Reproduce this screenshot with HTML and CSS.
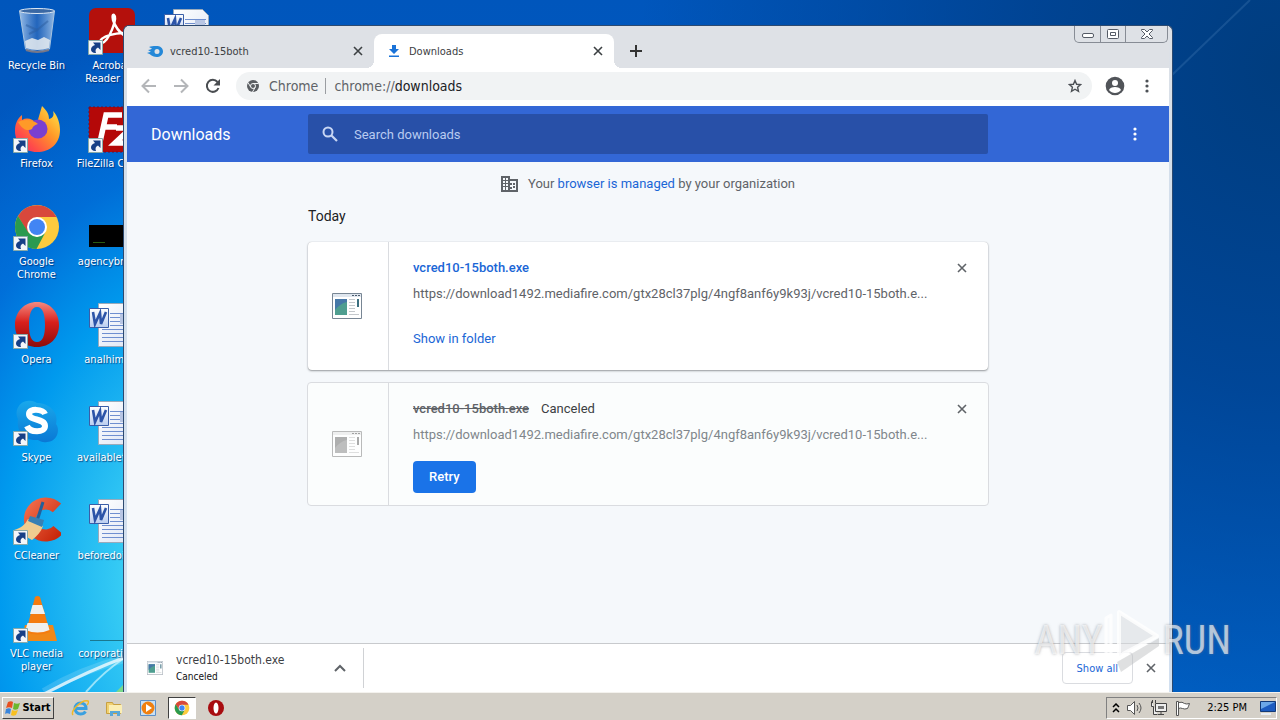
FILE: index.html
```html
<!DOCTYPE html>
<html lang="en">
<head>
<meta charset="utf-8">
<title>Downloads</title>
<link rel="stylesheet" href="styles.css">
</head>
<body>
<svg class="defs" aria-hidden="true">
  <defs>
    <linearGradient id="gDoc" x1="0" y1="0" x2="1" y2="1"><stop offset="0" stop-color="#fff"/><stop offset="1" stop-color="#dce4f4"/></linearGradient>
    <linearGradient id="gWord" x1="0" y1="0" x2="0" y2="1"><stop offset="0" stop-color="#fff"/><stop offset="1" stop-color="#b9cdf0"/></linearGradient>
    <linearGradient id="gFox" x1="1" y1="0" x2="0" y2="1"><stop offset="0" stop-color="#fff04a"/><stop offset=".4" stop-color="#ff9a28"/><stop offset=".75" stop-color="#ff4a4a"/><stop offset="1" stop-color="#e82a70"/></linearGradient>
    <linearGradient id="gOpera" x1="0" y1="0" x2="0" y2="1"><stop offset="0" stop-color="#f58a80"/><stop offset=".45" stop-color="#d8201c"/><stop offset="1" stop-color="#8c0c0c"/></linearGradient>
    <linearGradient id="gSkype" x1="0" y1="0" x2="0" y2="1"><stop offset="0" stop-color="#19a8ec"/><stop offset="1" stop-color="#0a78d4"/></linearGradient>
    <linearGradient id="gBin" x1="0" y1="0" x2="1" y2="0"><stop offset="0" stop-color="#b4d0f0" stop-opacity=".85"/><stop offset=".5" stop-color="#3a70bc" stop-opacity=".6"/><stop offset="1" stop-color="#b8d2ee" stop-opacity=".8"/></linearGradient>
    <linearGradient id="gCC" x1="0" y1="0" x2="1" y2="1"><stop offset="0" stop-color="#f06a48"/><stop offset="1" stop-color="#c8280c"/></linearGradient>
    <symbol id="shortcut" viewBox="0 0 15 15">
      <path fill="#f4f6fa" stroke="#8aa" d="M.5.5h14v14H.5z"/>
      <path fill="#173f86" d="M5 2.500h7.500V10l-2.500-2.500C7.500 8.500 7 10.500 8 13 5.500 13.500 3 12 3 9.500 3 7.500 4.500 5.800 7 5z"/>
    </symbol>
    <symbol id="chrome" viewBox="0 0 48 48">
      <circle cx="24" cy="24" r="22" fill="#fdcb3e"/>
      <path fill="#d8483c" d="M5 13 15 30 24 14h19.500A22 22 0 0 0 5 13z"/>
      <path fill="#2a9a50" d="M5 13 15.300 29.500 24 34l8-4-8.500 16A22 22 0 0 1 5 13z"/>
      <circle cx="24" cy="24" r="10" fill="#fff"/><circle cx="24" cy="24" r="8" fill="#4285f4"/>
    </symbol>
    <symbol id="word" viewBox="0 0 48 48">
      <path fill="url(#gDoc)" stroke="#9ab" d="M10.500 2.500h29l6 6v37h-35z"/>
      <path stroke="#6f8fd0" d="M22 12.500h21M22 16.500h21M22 20.500h21M22 24.500h21M14 28.500h29M14 32.500h29M14 36.500h29M14 40.500h29"/>
      <path fill="#b8c6e4" d="M32 13h10v10H32z"/>
      <path fill="url(#gWord)" stroke="#3a5ea8" d="M1.500 7.500h19v19h-19z"/>
      <path fill="none" stroke="#2c54a8" stroke-width="2.600" d="m5 11 2 12 5-11 1 11 5-12"/>
    </symbol>
    <symbol id="exe" viewBox="0 0 30 26">
      <path fill="#fff" stroke="#788694" d="M.5.5h29v25H.5z"/>
      <path fill="#dfe6ee" d="M1 1h28v3H1z"/><path stroke="#4a5a6c" stroke-dasharray="2 1" d="M20 2.500h8"/>
      <path fill="#4f9e90" d="M3 6h12v16H3z"/><path fill="#4678a8" d="M3 6h12v3c-5 1-9 4-12 8z"/>
      <path stroke="#c4c8cc" d="M17 6.500h6M17 9.500h6M17 12.500h6M17 15.500h6M17 18.500h6M17 21.500h10"/>
      <path fill="#3c7080" d="M25 6h2v8h-2z"/>
    </symbol>
    <symbol id="cross" viewBox="0 0 10 10"><path fill="none" stroke="currentColor" stroke-width="1.600" d="m1 1 8 8M9 1 1 9"/></symbol>
    <symbol id="dots" viewBox="0 0 4 14"><g fill="currentColor"><circle cx="2" cy="2" r="1.600"/><circle cx="2" cy="7" r="1.600"/><circle cx="2" cy="12" r="1.600"/></g></symbol>
    <symbol id="opera" viewBox="0 0 48 48"><path fill="url(#gOpera)" fill-rule="evenodd" d="M24 1c13 0 22 10 22 23S37 46 24 46 2 37 2 24 11 1 24 1zm0 5c-6 0-8 8-8 18s2 17 8 17 8-7 8-17-2-18-8-18z"/></symbol>
  </defs>
</svg>

<main class="desktop">
  <svg class="streaks" viewBox="0 0 1280 692" preserveAspectRatio="none" aria-hidden="true">
    <path fill="none" stroke="#fff" stroke-opacity=".15" stroke-width="8" d="M44 692Q80 670 124 659"/>
    <path fill="none" stroke="#fff" stroke-opacity=".75" stroke-width="3" d="M44 694Q90 670 126 657"/>
    <path fill="none" stroke="#e8ffff" stroke-opacity=".6" stroke-width="2" d="M86 692Q104 671 126 657"/>
    <path fill="#8fe070" fill-opacity=".8" d="m116 692 8-8v8z"/>
    <path stroke="#6fa0d0" stroke-opacity=".2" stroke-width="2" d="M1172 75 1250 0"/>
  </svg>

  <ul class="icons">
    <li><svg viewBox="0 0 48 48"><path fill="url(#gBin)" stroke="#a8c4e0" d="M6.500 4h35l-5 38q-12 5-24 0z"/><ellipse cx="24" cy="4" rx="17.500" ry="2.500" fill="#3a68a4" stroke="#dfeaf5"/><path fill="#e8ecf0" fill-opacity=".85" d="m12 34 7-3 6 2 6-3 6 3-1 8q-12 4-23 0z"/><path fill="none" stroke="#2c5da0" stroke-width="2" stroke-opacity=".5" d="m13 18 11 5 11-9M16 27l8-4"/><path fill="none" stroke="#778" stroke-width="2" d="M13 43q11 4 23 0"/></svg><span>Recycle Bin</span></li>
    <li><svg viewBox="0 0 48 48"><path fill="url(#gFox)" d="M29 1c5 5 7 8 7 13 5-1 5-5 4-8 5 5 7 13 7 19 0 14-10 22-23 22S2 38 2 26c0-7 2-12 7-16v5c5-3 10-1 15 3z"/><circle cx="25" cy="24" r="9.500" fill="#7a3fd0"/><path fill="#ff9a28" d="M5 17c5-3 15-3 20 2-3 1-5 2-6 5-3 2-9 2-14-7z"/><use href="#shortcut" y="33" width="15" height="15"/></svg><span>Firefox</span></li>
    <li><svg viewBox="0 0 48 48"><use href="#chrome" width="48" height="48"/><use href="#shortcut" y="33" width="15" height="15"/></svg><span>Google<br>Chrome</span></li>
    <li><svg viewBox="0 0 48 48"><use href="#opera" width="48" height="48"/><use href="#shortcut" y="33" width="15" height="15"/></svg><span>Opera</span></li>
    <li><svg viewBox="0 0 48 48"><path fill="url(#gSkype)" d="M14 2c5-1 8 1 10 2 13 0 22 10 19 21 5 7 0 18-9 18-4 1-7-1-9-2C12 42 3 33 5 20 1 12 6 3 14 2z"/><path fill="none" stroke="#fff" stroke-width="6" d="M32 15c-2-5-16-6-16 0 0 7 16 4 16 12 0 7-15 7-18 0"/><use href="#shortcut" y="32" width="15" height="15"/></svg><span>Skype</span></li>
    <li><svg viewBox="0 0 48 48"><path fill="none" stroke="url(#gCC)" stroke-width="12" d="M44 11A16 16 0 1 0 45 33"/><path stroke="#24609a" stroke-width="3" d="M30 5 24 24"/><path fill="#f0cc90" d="m15 22 15 7c-2 6-6 10-11 14L1 33c7-2 11-5 14-11z"/><path fill="#3880b4" d="m17 19 14 4-2 7-14-6z"/><use href="#shortcut" y="33" width="15" height="15"/></svg><span>CCleaner</span></li>
    <li><svg viewBox="0 0 48 48"><path fill="#f08818" d="M12 30h28l4 16H8z"/><path fill="#f47c10" d="M22 2q2.500-2 5 0l10 35q-13 5-24 0z"/><path fill="#f0f0ee" d="m19.500 10h9.500l3 9H17zM14.500 28h20l2 7q-12 5-24 0z"/><use href="#shortcut" y="33" width="15" height="15"/></svg><span>VLC media<br>player</span></li>
    <li><svg viewBox="0 0 48 48"><rect x="1" y="1" width="46" height="45" rx="7" fill="#b4100c"/><path fill="none" stroke="#fff" stroke-width="2.500" d="M12 34c4-7 30-11 31-5 0 4-13-1-18-16-1-4 0-6 1-5 4 3-5 26-12 28"/><use href="#shortcut" y="33" width="15" height="15"/></svg><span>Acrobat<br>Reader DC</span></li>
    <li><svg viewBox="0 0 48 48"><path fill="#b40808" stroke="#6d1030" stroke-dasharray="2 2" d="M1 2h46v45H1z"/><path fill="none" stroke="#fff" stroke-width="5.500" d="m12 37 6-27h16M14 22h15M28 23h15L27 38h14"/><use href="#shortcut" y="33" width="15" height="15"/></svg><span>FileZilla Client</span></li>
    <li><svg viewBox="0 0 48 48"><path d="M1 22h46v22H1z"/><path stroke="#2a5a10" d="M5 39.500h12"/></svg><span>agencybr.png</span></li>
    <li><svg viewBox="0 0 48 48"><use href="#word" width="48" height="48"/></svg><span>analhim.rtf</span></li>
    <li><svg viewBox="0 0 48 48"><use href="#word" width="48" height="48"/></svg><span>availableto.rtf</span></li>
    <li><svg viewBox="0 0 48 48"><use href="#word" width="48" height="48"/></svg><span>beforedoin.rtf</span></li>
    <li><svg viewBox="0 0 48 48"><path stroke="#1a7890" stroke-width="1" d="M2 45.500h46"/></svg><span>corporati.png</span></li>
    <li><svg viewBox="0 0 48 48"><use href="#word" width="48" height="48"/></svg></li>
  </ul>

  <section class="window">
    <div class="strip">
      <div class="tab">
        <svg class="i16" viewBox="0 0 16 16"><path fill="#2488d8" fill-rule="evenodd" d="M2 4c2-1 4-1 7-1 4.500 0 7 2 7 5.500S13 14 9.500 14C5 14 4 11 0 10c2-1 3-1 4-1L1 7c2 0 3-1 4-1.500zm8 2a2.500 2.500 0 1 0 0 5 2.500 2.500 0 0 0 0-5z"/></svg>
        <span>vcred10-15both</span>
        <button aria-label="Close tab"><svg class="i10"><use href="#cross"/></svg></button>
      </div>
      <div class="tab active">
        <svg class="i16" viewBox="0 0 16 16"><path fill="#1a73d8" d="M6 2h4v4h3L8 11 3 6h3zM3 12.500h10V14H3z"/></svg>
        <span>Downloads</span>
        <button aria-label="Close tab"><svg class="i10"><use href="#cross"/></svg></button>
      </div>
      <button class="plus" aria-label="New tab"><svg viewBox="0 0 12 12"><path stroke="#333" stroke-width="2" d="M6 0v12M0 6h12"/></svg></button>
      <div class="controls">
        <button aria-label="Minimize"><svg width="14" height="8" viewBox="0 0 14 8"><rect x="1.500" y="3.500" width="11" height="4" rx="1.500" fill="#fff" stroke="#555b66"/></svg></button>
        <button aria-label="Maximize"><svg width="12" height="10" viewBox="0 0 12 10"><rect x=".5" y=".5" width="11" height="9" rx="1" fill="#fff" stroke="#555b66"/><path fill="#fff" stroke="#555b66" d="M3.500 3.500h5v3h-5z"/></svg></button>
        <button aria-label="Close"><svg width="12" height="10" viewBox="0 0 12 10"><path fill="#fff" stroke="#555b66" d="M.5.500h3L6 3 8.500.500h3v1L8 5l3.500 3.500v1h-3L6 7 3.500 9.500h-3v-1L4 5 .5 1.500z"/></svg></button>
      </div>
    </div>

    <div class="toolbar">
      <button aria-label="Back"><svg class="i16" viewBox="0 0 16 16"><path fill="none" stroke="#b4b6b9" stroke-width="2" d="M15 8H2M8 1.500 1.500 8 8 14.500"/></svg></button>
      <button aria-label="Forward"><svg class="i16" viewBox="0 0 16 16"><path fill="none" stroke="#b4b6b9" stroke-width="2" d="M1 8h13M8 1.500 14.500 8 8 14.500"/></svg></button>
      <button aria-label="Reload"><svg class="i16" viewBox="0 0 16 16"><path fill="none" stroke="#4a4d51" stroke-width="2" d="M13.500 10A6 6 0 1 1 12.500 4"/><path fill="#4a4d51" d="M15 1v6.500H8.500z"/></svg></button>
      <div class="omnibox">
        <svg width="12" height="12" viewBox="0 0 12 12"><circle cx="6" cy="6" r="6" fill="#5a5d61"/><circle cx="6" cy="6" r="2.500" fill="#5a5d61" stroke="#f1f3f4"/><path fill="none" stroke="#f1f3f4" d="M6 3.500h5.500M3.800 7.300 1 2.500M8.200 7.300 5.500 12"/></svg>
        <span class="scheme">Chrome</span>
        <label class="proto" for="url">chrome://</label>
        <input id="url" type="text" value="downloads">
        <button aria-label="Bookmark"><svg width="14" height="14" viewBox="0 0 14 14"><path fill="none" stroke="#4d5156" stroke-width="1.400" d="m7 1.500 1.600 3.800 4 .3-3 2.700.9 4L7 10.200l-3.500 2.100.9-4-3-2.700 4-.3z"/></svg></button>
      </div>
      <button aria-label="Profile"><svg width="20" height="20" viewBox="0 0 20 20"><circle cx="10" cy="10" r="9.300" fill="#515459"/><circle cx="10" cy="7" r="3" fill="#fff"/><path fill="#fff" d="M4 14c1-4 11-4 12 0-3 4-9 4-12 0z"/></svg></button>
      <button class="more" aria-label="Menu"><svg class="dots"><use href="#dots"/></svg></button>
    </div>

    <header class="pagebar">
      <h1>Downloads</h1>
      <label class="search"><svg class="i16" viewBox="0 0 16 16"><circle cx="6" cy="6" r="4.500" fill="none" stroke="#c8d6f4" stroke-width="2"/><path stroke="#c8d6f4" stroke-width="2.200" d="m9.500 9.500 5.500 5.500"/></svg><input type="search" placeholder="Search downloads" aria-label="Search downloads"></label>
      <button aria-label="More actions"><svg class="dots"><use href="#dots"/></svg></button>
    </header>

    <div class="page">
      <div class="column">
        <p class="managed"><svg width="17" height="16" viewBox="0 0 17 16"><path fill="#5f6368" fill-rule="evenodd" d="M0 0h9v3h8v13H0zm2 2v2h2V2zm3 0v2h2V2zM2 5v2h2V5zm3 0v2h2V5zM2 8v2h2V8zm3 0v2h2V8zm-3 3v3h2v-3zm3 0v3h2v-3zm4-6v2h2v2H9v2h2v2H9v1h6V5zm3 2h2v2h-2zm0 3h2v2h-2z"/></svg><span>Your <a href="#">browser is managed</a> by your organization</span></p>
        <h2>Today</h2>
        <article class="card">
          <div class="thumb"><svg><use href="#exe"/></svg></div>
          <div class="info">
            <p class="name"><a href="#">vcred10-15both.exe</a></p>
            <p class="url">https://download1492.mediafire.com/gtx28cl37plg/4ngf8anf6y9k93j/vcred10-15both.e...</p>
            <p class="show"><a href="#">Show in folder</a></p>
          </div>
          <button class="remove" aria-label="Remove from list"><svg class="i10"><use href="#cross"/></svg></button>
        </article>
        <article class="card cancelled">
          <div class="thumb"><svg><use href="#exe"/></svg></div>
          <div class="info">
            <p class="name"><s>vcred10-15both.exe</s><span>Canceled</span></p>
            <p class="url">https://download1492.mediafire.com/gtx28cl37plg/4ngf8anf6y9k93j/vcred10-15both.e...</p>
            <button class="retry">Retry</button>
          </div>
          <button class="remove" aria-label="Remove from list"><svg class="i10"><use href="#cross"/></svg></button>
        </article>
      </div>
    </div>

    <footer class="shelf">
      <div class="item">
        <svg width="16" height="14"><use href="#exe"/></svg>
        <div class="file"><b>vcred10-15both.exe</b><small>Canceled</small></div>
        <button aria-label="Item menu"><svg width="12" height="8" viewBox="0 0 12 8"><path fill="none" stroke="#5f6368" stroke-width="2" d="m1 7 5-5 5 5"/></svg></button>
      </div>
      <button class="all">Show all</button>
      <button class="closeshelf" aria-label="Close downloads bar"><svg class="i10"><use href="#cross"/></svg></button>
    </footer>
  </section>

  <div class="watermark"><span>ANY</span><svg viewBox="0 0 60 66"><path fill="#fff" fill-opacity=".35" stroke="#fff" stroke-opacity=".75" stroke-width="3" stroke-linejoin="round" d="M3 10 8 7v48l-5 3z"/><path fill="#d8dadd" fill-opacity=".5" stroke="#fff" stroke-opacity=".8" stroke-width="4" stroke-linejoin="round" d="M16 4v44l38-20z"/><path fill="#b8babd" fill-opacity=".45" d="m14 54 42-24v8L18 64z"/></svg><span>RUN</span></div>
</main>

<nav class="taskbar">
  <button class="start"><svg width="16" height="16" viewBox="0 0 16 16"><path fill="#e85020" d="M3 2c2-1 4-1 5 0L7 8C5 7 3 7 1 8z"/><path fill="#6cb82c" d="M9 3c2 1 4 1 6 0l-2 6c-2 1-4 1-5 0z"/><path fill="#3a86dc" d="M1 9c2-1 4-1 5 0l-1 5c-2-1-4-1-5 0z"/><path fill="#f8c020" d="M7 10c2 1 4 1 6 0l-2 5c-2 1-4 1-5 0z"/></svg>Start</button>
  <div class="quick">
    <button aria-label="Internet Explorer"><svg class="i18" viewBox="0 0 18 18"><path fill="none" stroke="#3aa0e0" stroke-width="3" d="M4 9.500h11C15 6 12.500 4 9.500 4S4 6.500 4 9.500 6.500 15 9.500 15c2 0 4-1 5-2.500"/><path fill="none" stroke="#f0b828" stroke-width="1.500" d="M2 16C-1 12 11 0 17 2c1 1 0 3-1 4"/></svg></button>
    <button aria-label="Explorer"><svg class="i18" viewBox="0 0 18 18"><path fill="#f0d070" stroke="#c8a040" d="M1.500 3.500h6l1 2h7v9h-14z"/><path fill="#fbeeb4" d="M4 6h13v8H4z"/><path fill="#58a8d8" d="M5 12h10v5h-3v-3H8v3H5z"/></svg></button>
    <button aria-label="Media Player"><svg class="i18" viewBox="0 0 18 18"><path fill="#c8e0f4" stroke="#5c90c8" d="M1.500 1.500h15v15h-15z"/><circle cx="9" cy="9" r="6.500" fill="#f08010"/><path fill="#fff" d="m7 5 6 4-6 4z"/></svg></button>
    <button class="pressed" aria-label="Chrome"><svg class="i16"><use href="#chrome"/></svg></button>
    <button aria-label="Opera"><svg class="i18"><circle cx="9" cy="9" r="8" fill="#a80c10"/><ellipse cx="9" cy="9" rx="2.500" ry="5.500" fill="#fff"/></svg></button>
  </div>
  <div class="tray">
    <svg width="8" height="10" viewBox="0 0 8 10"><path fill="none" stroke="#000" stroke-width="1.500" d="m1 4 3-3 3 3M1 9l3-3 3 3"/></svg>
    <svg class="i18" viewBox="0 0 18 18"><path fill="#fff" stroke="#555" d="M1.500 6.500h3l4-4v13l-4-4h-3z"/><path fill="none" stroke="#555" d="M11 6q2 3 0 6M13 4q4 5 0 10"/></svg>
    <svg class="i18" viewBox="0 0 18 18"><path fill="#eee" stroke="#444" d="M5.500 4.500h11v8h-11zM8 15.500h6M11 13v2M1.500 2.500v5h2v8h4"/><path fill="#777" d="M8 7h6v3H8z"/><path stroke="#444" d="M2.500 1v3M5.500 1v3"/></svg>
    <svg class="i18" viewBox="0 0 18 18"><path fill="#fff" stroke="#555" d="M2.500 2.500h2v14h-2zM4.500 3.500q4-1 6 1 2 1 5 0-1 3-2 5-3 1-5 0-2-1-4 0z"/></svg>
    <time>2:25 PM</time>
    <svg width="16" height="14" viewBox="0 0 16 14"><path fill="#1c5cc0" stroke="#123a78" d="M.5.500h15v10H.5z"/><path fill="#6ca8e8" d="M1 1h14L1 8z"/><path fill="#e8eef4" d="M1 12h10v2H1z"/></svg>
  </div>
</nav>
</body>
</html>
```
FILE: styles.css
```css
* { box-sizing: border-box; margin: 0; padding: 0; }
body { display: flex; flex-direction: column; height: 100vh; overflow: hidden; font-family: "DejaVu Sans Condensed", "DejaVu Sans", sans-serif; font-size: 11px; color: #222; }
button { border: 0; background: none; font: inherit; color: inherit; display: inline-flex; align-items: center; justify-content: center; }
input { border: 0; background: none; font: inherit; color: inherit; outline: 0; min-width: 0; }
a { text-decoration: none; color: #1a66d6; }
ul { list-style: none; }
svg { display: block; flex: none; }
.defs { position: absolute; width: 0; height: 0; }
.i10 { width: 10px; height: 10px; }
.i16 { width: 16px; height: 16px; }
.i18 { width: 18px; height: 18px; }
.dots { width: 4px; height: 14px; }

.desktop {
  position: relative; flex: 1; min-height: 0; overflow: hidden;
  background:
    radial-gradient(ellipse 400px 560px at 220px 580px, #5ce4f8 0, rgba(56, 208, 246, .95) 25%, rgba(0, 164, 244, .85) 55%, rgba(0, 130, 236, .5) 75%, rgba(0, 100, 220, 0) 100%),
    radial-gradient(ellipse 640px 800px at 100% 10%, rgba(0, 58, 120, .9) 0, rgba(0, 62, 135, .75) 40%, rgba(0, 80, 180, 0) 100%),
    linear-gradient(#0056bc 0, #0058c0 20%, #0060cc 60%, #0068d4 100%);
}
.streaks { position: absolute; inset: 0; width: 100%; height: 100%; }
.icons { position: relative; display: grid; grid-template: repeat(7, 98px) / repeat(3, 73px); grid-auto-flow: column; column-gap: 2px; }
.icons li { display: flex; flex-direction: column; align-items: center; gap: 4px; padding-top: 7px; }
.icons svg { width: 48px; height: 48px; }
.icons span { color: #fff; line-height: 13px; text-align: center; white-space: nowrap; text-shadow: 1px 1px 1px rgba(0, 30, 90, .7); }

.window { position: absolute; top: 25px; left: 123px; right: 107px; bottom: 0; display: flex; flex-direction: column; padding: 0 3px; background: linear-gradient(#dee1e6 0, #d4dfeb 140px, #d2e0f0 100%); border: 1px solid #2d4a70; border-bottom: 0; border-radius: 6px 6px 0 0; }
.strip { display: flex; align-items: flex-end; height: 42px; background: #dee1e6; }
.tab { position: relative; display: flex; align-items: center; width: 240px; height: 34px; padding: 0 11px 0 13px; color: #3c4043; margin-left: 7px; }
.tab span { flex: 1; padding-left: 7px; }
.tab + .tab { margin-left: 0; padding-left: 12px; }
.active { background: #fff; border-radius: 8px 8px 0 0; }
.active::before, .active::after { content: ""; position: absolute; bottom: 0; width: 8px; height: 8px; background: radial-gradient(circle at 0 0, #dee1e6 8px, #fff 8px); }
.active::before { left: -8px; }
.active::after { right: -8px; background: radial-gradient(circle at 100% 0, #dee1e6 8px, #fff 8px); }
.plus { width: 28px; height: 34px; margin-left: 8px; }
.plus svg { width: 12px; height: 12px; }
.controls { display: flex; align-self: flex-start; height: 17px; margin-left: auto; margin-right: 1px; border: 1px solid #878c95; border-top: 0; border-radius: 0 0 5px 5px; }
.controls button { width: 25px; }
.controls button + button { border-left: 1px solid #878c95; }
.controls button:last-child { width: 42px; }

.toolbar { display: flex; align-items: center; height: 38px; padding: 0 6px 2px 6px; background: #fff; }
.toolbar > button { width: 32px; height: 32px; }
.omnibox { flex: 1; display: flex; align-items: center; height: 28px; margin: 0 7px 0 7px; padding: 0 5px 0 11px; border-radius: 14px; background: #f1f3f4; font-size: 14px; color: #5f6368; }
.scheme { margin-left: 10px; padding-right: 7px; border-right: 1px solid #9a9da1; line-height: 16px; }
.proto { margin-left: 8px; }
.omnibox input { flex: 1; color: #202124; }
.omnibox button { width: 24px; height: 24px; }
.toolbar .more { color: #4d5156; }

.pagebar { display: grid; grid-template-columns: minmax(0, 1fr) minmax(0, 680px) minmax(0, 1fr); align-items: center; height: 56px; background: #3367d6; color: #fff; font-family: Roboto, sans-serif; }
.pagebar h1 { padding-left: 24px; font-size: 16px; font-weight: 400; }
.pagebar > button { justify-self: end; width: 28px; height: 28px; margin-right: 20px; }
.search { display: flex; align-items: center; gap: 16px; height: 40px; padding: 0 14px; background: #2850a8; border-radius: 2px; }
.search input { flex: 1; font-size: 13px; }
.search input::placeholder { color: #b9cbf0; opacity: 1; }

.page { flex: 1; min-height: 0; padding: 12px 16px; background: #f5f8fb; font: 13px/20px Roboto, sans-serif; }
.column { max-width: 680px; margin: 0 auto; }
.managed { display: flex; align-items: center; justify-content: center; gap: 10px; color: #5f6368; }
.page h2 { margin: 12px 0 16px; font-size: 14px; line-height: 20px; font-weight: 400; color: #202124; }
.card { display: flex; min-height: 128px; margin-bottom: 12px; background: #fff; border-radius: 4px; box-shadow: 0 1px 2px rgba(60, 64, 67, .5), 0 0 1px rgba(60, 64, 67, .3); }
.thumb { display: flex; align-items: center; justify-content: center; width: 81px; padding-right: 2px; border-right: 1px solid #dadce0; }
.thumb svg { width: 30px; height: 26px; }
.info { flex: 1; min-width: 0; padding: 16px 0 12px 24px; }
.name { font-weight: 500; }
.name span { margin-left: 12px; font-weight: 400; color: #3c4043; }
.url { margin-top: 6px; color: #5f6368; white-space: nowrap; }
.show { margin-top: 25px; }
.remove { width: 24px; height: 24px; margin: 14px 14px 0 0; color: #5f6368; }
.card.cancelled { min-height: 124px; margin: 0 -1px; background: #fbfdfd; border: 1px solid #dadce0; box-shadow: none; }
.cancelled .thumb svg { filter: grayscale(1); opacity: .55; }
.cancelled s { color: #5f6368; }
.cancelled .url { color: #80868b; }
.retry { margin-top: 16px; height: 32px; padding: 0 16px; border-radius: 4px; background: #1a73e8; color: #fff; font-weight: 500; }

.shelf { display: flex; align-items: center; height: 49px; padding-right: 6px; background: #fff; border-top: 1px solid #c8cacd; }
.item { display: flex; align-items: center; width: 237px; height: 40px; padding: 0 11px 0 20px; border-right: 1px solid #d0d2d5; }
.file { flex: 1; margin-left: 13px; }
.file b, .file small { display: block; font-weight: 400; }
.file b { font-size: 12px; line-height: 18px; color: #3c4043; }
.file small { font-size: 10px; line-height: 16px; color: #111; }
.item button { width: 24px; height: 24px; }
.all { height: 32px; margin-left: auto; padding: 0 14px; border: 1px solid #dadce0; border-radius: 4px; color: #1a66d6; }
.closeshelf { width: 24px; height: 24px; margin-left: 6px; color: #5f6368; }

.watermark { position: absolute; right: 49px; bottom: 18px; display: flex; align-items: center; color: rgba(255, 255, 255, .65); font: 40px/40px "Roboto Condensed", "Open Sans Condensed", "Liberation Sans Narrow", sans-serif; text-shadow: 0 0 3px rgba(120, 124, 130, .6); pointer-events: none; }
.watermark svg { width: 60px; height: 66px; }

.taskbar { display: flex; align-items: center; height: 28px; padding: 2px 3px 0 2px; background: #d4d0c8; border-top: 1px solid #f4f2ee; }
.start { gap: 1px; width: 52px; height: 22px; border: 1px solid; border-color: #fff #404040 #404040 #fff; font-size: 11px; font-weight: 700; color: #000; }
.quick { display: flex; align-items: center; gap: 6px; margin-left: 12px; }
.quick button { width: 28px; height: 22px; }
.quick .pressed { background: #fff; border: 1px solid; border-color: #404040 #fff #fff #404040; }
.tray { display: flex; align-items: center; gap: 6px; height: 22px; margin-left: auto; padding: 0 0 0 5px; border: 1px solid; border-color: #808080 #fff #fff #808080; color: #000; }
.tray time { margin: 0 7px 0 9px; }
```
